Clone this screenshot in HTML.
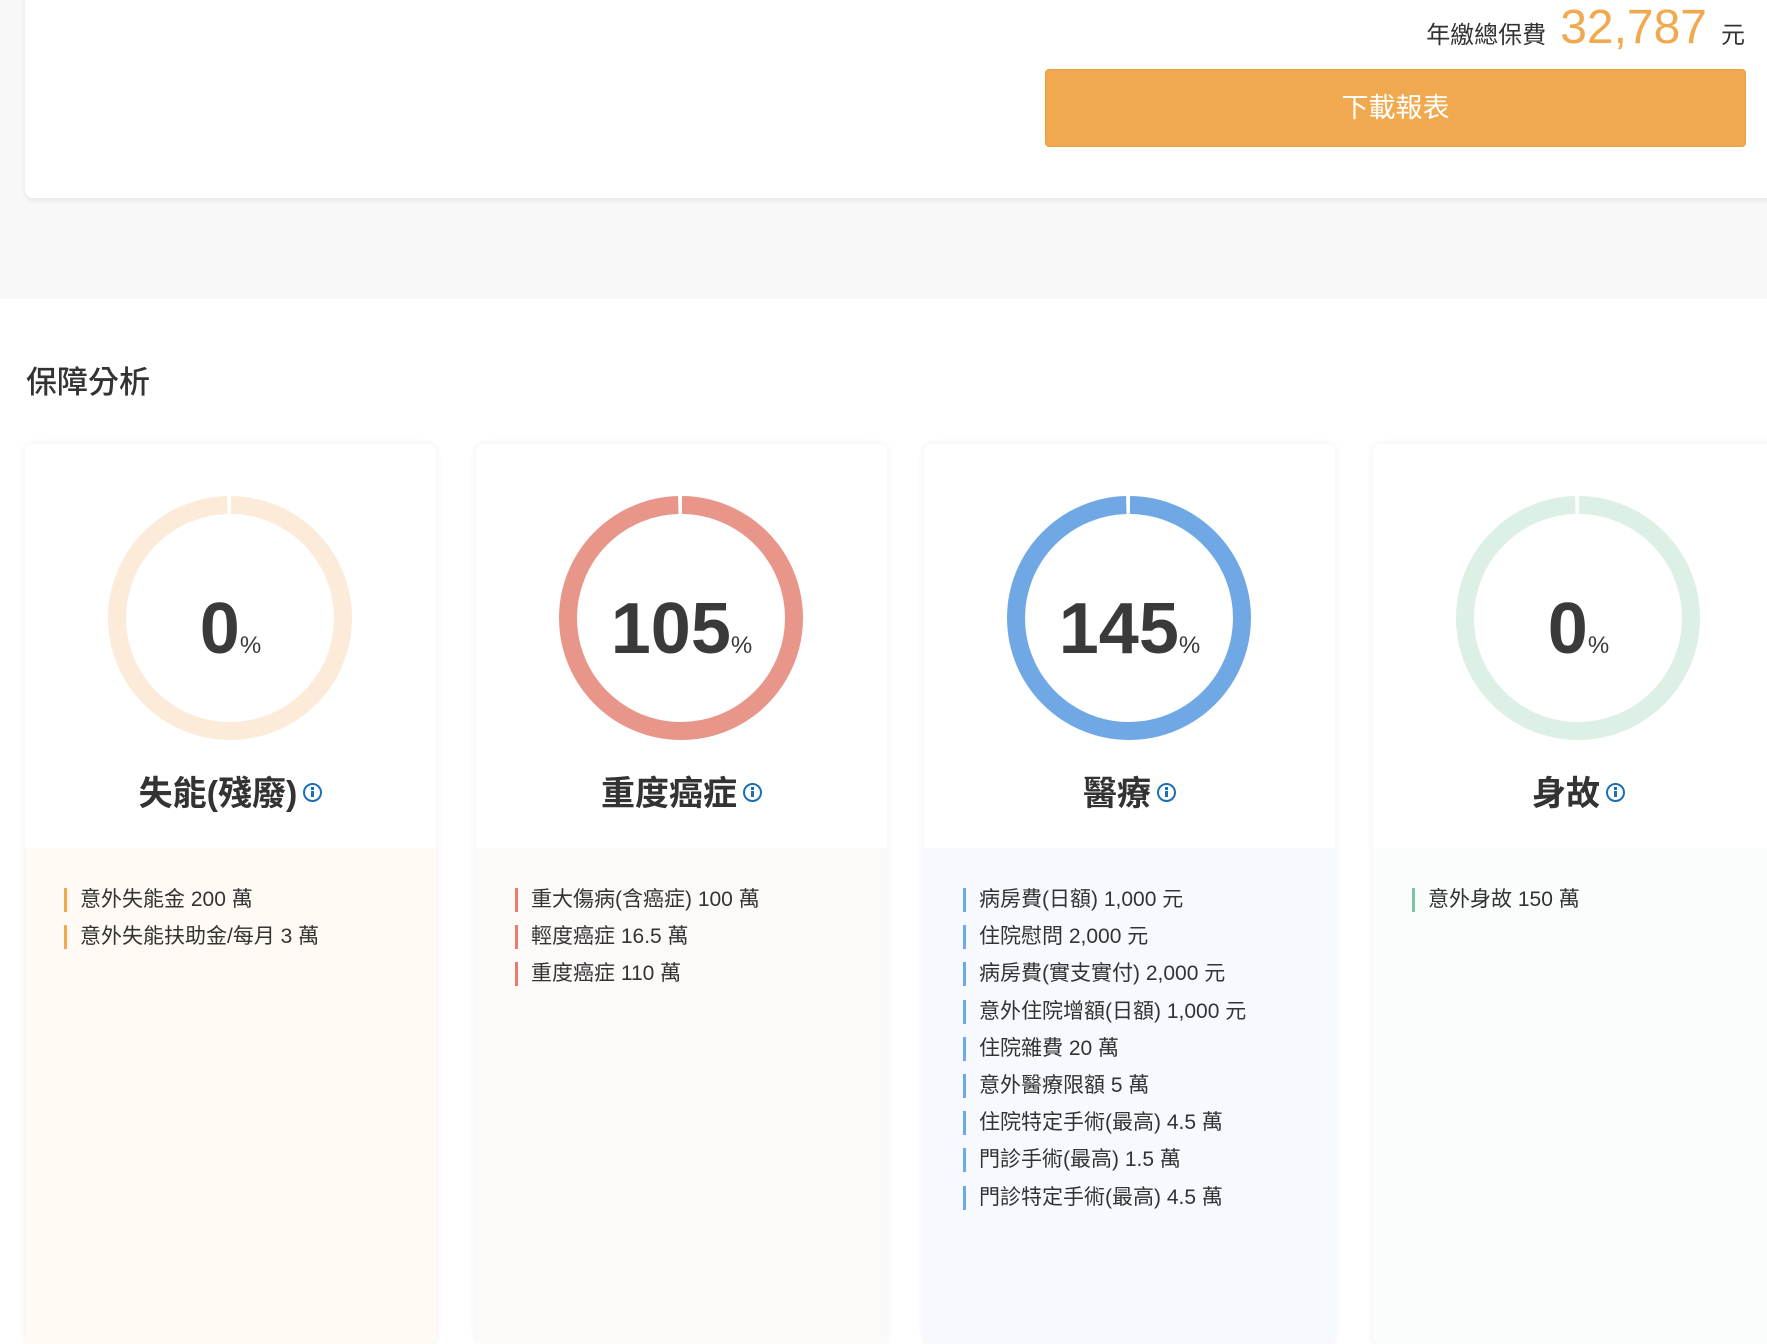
<!DOCTYPE html>
<html><head><meta charset="utf-8"><style>
*{margin:0;padding:0;box-sizing:border-box}
body{width:1767px;height:1226px;overflow:hidden;background:#fff;font-family:"Liberation Sans","Noto Sans CJK TC",sans-serif;color:#333;position:relative}
.topbg{position:absolute;left:0;top:0;width:1767px;height:299px;background:#f8f8f8}
.topcard{position:absolute;left:25px;top:-20px;width:1760px;height:218px;background:#fff;border-radius:8px;box-shadow:0 2px 6px rgba(0,0,0,.08)}
.total{position:absolute;right:22px;top:0;height:52px;display:flex;align-items:baseline;white-space:nowrap}
.total .l{font-size:24px;color:#333}
.total .n{font-size:48px;color:#f0a94f;margin:0 14px}
.total .u{font-size:24px}
.btn{position:absolute;left:1045px;top:69px;width:701px;height:78px;background:#f0a94f;border:1px solid #eea040;border-radius:4px;color:#fff;font-size:27px;text-align:center;line-height:76px}
h2{position:absolute;left:26px;top:357px;font-size:31px;font-weight:500;color:#333}
.card{position:absolute;top:444px;width:411px;height:900px;border-radius:8px;box-shadow:0 0 8px rgba(0,0,0,.07);background:#fff;overflow:hidden}
.card svg{position:absolute;left:83px;top:52px}
.num{position:absolute;left:0;width:100%;top:149px;text-align:center;font-size:72px;font-weight:700;color:#3a3a3a;line-height:72px}
.num small{font-size:24px;font-weight:400}
.ttl{position:absolute;left:0;width:100%;top:322px;text-align:center;font-size:34px;font-weight:600;color:#333}
.ttl i{display:inline-block;width:19px;height:19px;border:2.5px solid #1a6fb5;border-radius:50%;vertical-align:3px;margin-left:6px;position:relative;font-style:normal}
.ttl i:before{content:"";position:absolute;left:6px;top:6px;width:2.5px;height:6px;background:#1a6fb5}
.ttl i:after{content:"";position:absolute;left:6px;top:2px;width:2.5px;height:2.5px;background:#1a6fb5}
.low{position:absolute;left:0;top:404px;width:100%;height:500px;padding-top:33px}
.low div{position:relative;padding-left:55px;font-size:21px;line-height:37.2px;color:#333}
.low div:before{content:"";position:absolute;left:39px;top:7px;width:3px;height:24px}
.c1 .low div:before{background:#f0a94f}
.c2 .low div:before{background:#e87a6e}
.c3 .low div:before{background:#6fa8e4}
.c4 .low div:before{background:#7cc4a0}
</style></head><body>
<div class="topbg"></div>
<div class="topcard"></div>
<div class="total"><span class="l">年繳總保費</span><span class="n">32,787</span><span class="u">元</span></div>
<div class="btn">下載報表</div>
<h2>保障分析</h2>

<div class="card c1" style="left:25px">
<svg width="244" height="244"><circle cx="122" cy="122" r="113" fill="none" stroke="#fcebd8" stroke-width="18" stroke-dasharray="706 4" transform="rotate(-89.5 122 122)"/></svg>
<div class="num">0<small>%</small></div>
<div class="ttl">失能(殘廢)<i></i></div>
<div class="low" style="background:#fffaf4">
<div>意外失能金 200 萬</div><div>意外失能扶助金/每月 3 萬</div></div>
</div>

<div class="card c2" style="left:476px">
<svg width="244" height="244"><circle cx="122" cy="122" r="113" fill="none" stroke="#e8968a" stroke-width="18" stroke-dasharray="706 4" transform="rotate(-89.5 122 122)"/></svg>
<div class="num">105<small>%</small></div>
<div class="ttl">重度癌症<i></i></div>
<div class="low" style="background:#fcfaf9">
<div>重大傷病(含癌症) 100 萬</div><div>輕度癌症 16.5 萬</div><div>重度癌症 110 萬</div></div>
</div>

<div class="card c3" style="left:924px">
<svg width="244" height="244"><circle cx="122" cy="122" r="113" fill="none" stroke="#6fa8e4" stroke-width="18" stroke-dasharray="706 4" transform="rotate(-89.5 122 122)"/></svg>
<div class="num">145<small>%</small></div>
<div class="ttl">醫療<i></i></div>
<div class="low" style="background:#f6fafe">
<div>病房費(日額) 1,000 元</div><div>住院慰問 2,000 元</div><div>病房費(實支實付) 2,000 元</div><div>意外住院增額(日額) 1,000 元</div><div>住院雜費 20 萬</div><div>意外醫療限額 5 萬</div><div>住院特定手術(最高) 4.5 萬</div><div>門診手術(最高) 1.5 萬</div><div>門診特定手術(最高) 4.5 萬</div></div>
</div>

<div class="card c4" style="left:1373px">
<svg width="244" height="244"><circle cx="122" cy="122" r="113" fill="none" stroke="#ddf0e6" stroke-width="18" stroke-dasharray="706 4" transform="rotate(-89.5 122 122)"/></svg>
<div class="num">0<small>%</small></div>
<div class="ttl">身故<i></i></div>
<div class="low" style="background:#fafdfb">
<div>意外身故 150 萬</div></div>
</div>
</body></html>
